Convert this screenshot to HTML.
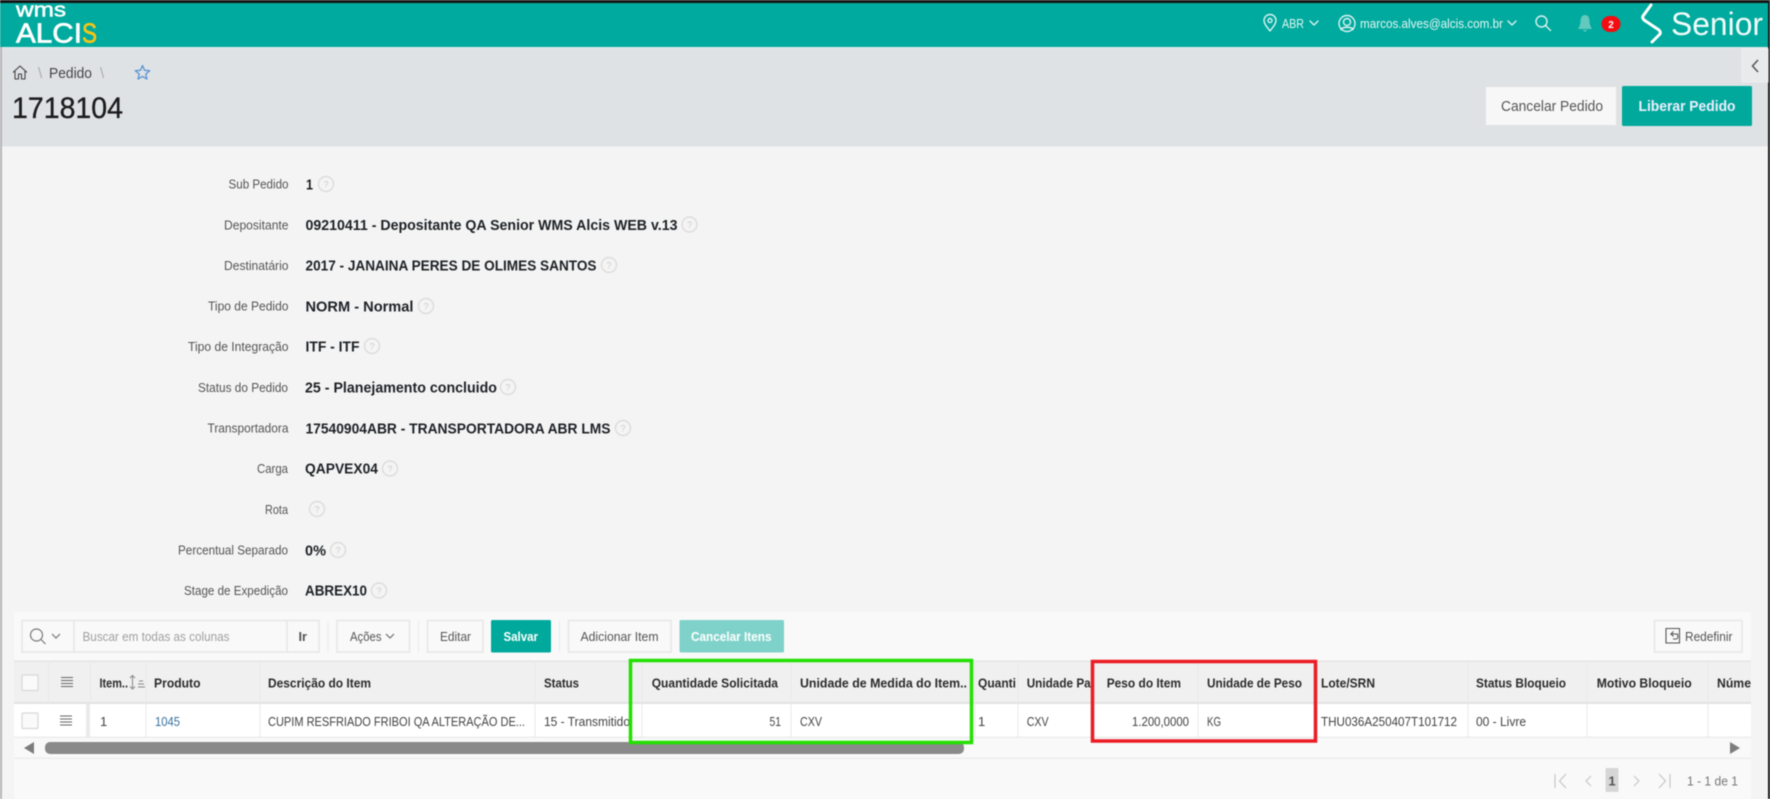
<!DOCTYPE html>
<html lang="pt-BR"><head><meta charset="utf-8"><title>Pedido 1718104</title>
<style>
html,body{margin:0;padding:0;width:1770px;height:799px;overflow:hidden;background:#f4f4f4}
svg{display:block;filter:blur(.45px)}
text{font-family:"Liberation Sans",sans-serif}
.l{font-size:13px;fill:#555}
.v{font-size:15px;font-weight:700;fill:#1d2125}
.h{font-size:13px;font-weight:700;fill:#2b2b2b}
.d{font-size:13px;fill:#444}
.b{font-size:13px;fill:#555}
.w{font-size:13px;font-weight:700;fill:#fff}
.q{font-size:9px;fill:#ccc;text-anchor:middle}
.hc{fill:none;stroke:#dcdcdc;stroke-width:1.4}
.bx{fill:#f9f9f9;stroke:#e6e6e6;stroke-width:1.5}
.ln{stroke:#e9e9e9;stroke-width:1}
.ic{fill:none;stroke:#fff;stroke-width:1.4;stroke-linecap:round;stroke-linejoin:round;opacity:.85}
.pg{fill:none;stroke:#c4c4c4;stroke-width:1.1}
</style></head><body>
<svg width="1770" height="799" viewBox="0 0 1770 799" xmlns="http://www.w3.org/2000/svg">
<rect width="1770" height="799" fill="#f4f4f4"/>
<rect x="0" y="47" width="2" height="752" fill="#b5b5b5"/>
<!-- top -->
<rect width="1770" height="3" fill="#141414"/>
<rect y="3" width="1770" height="44" fill="#00aa9e"/>
<text x="16" y="16.500" font-size="20" fill="#fff" stroke="#fff" stroke-width=".5" textLength="50" lengthAdjust="spacingAndGlyphs">wms</text>
<text x="16" y="42.500" font-size="28" fill="#fff" stroke="#fff" stroke-width=".7" textLength="66" lengthAdjust="spacingAndGlyphs">ALCI</text>
<text x="82" y="42.500" font-size="28" fill="#f5c518" stroke="#f5c518" stroke-width=".7" textLength="15" lengthAdjust="spacingAndGlyphs">S</text>
<!-- header right -->
<path class="ic" d="M1270 31c-3-4-6-7-6-10.500a6 6 0 0 1 12 0c0 3.500-3 6.500-6 10.500z"/><circle class="ic" cx="1270" cy="20.500" r="2"/>
<text x="1282" y="28" font-size="13" fill="#fff" opacity=".9" textLength="22" lengthAdjust="spacingAndGlyphs">ABR</text>
<path class="ic" d="M1310 21l4 4 4-4"/>
<circle class="ic" cx="1347" cy="23.500" r="8"/><circle class="ic" cx="1347" cy="22" r="3.500"/><path class="ic" d="M1341 29.500c1.500-3 10.500-3 12 0"/>
<text x="1360" y="28" font-size="13" fill="#fff" opacity=".9" textLength="143" lengthAdjust="spacingAndGlyphs">marcos.alves@alcis.com.br</text>
<path class="ic" d="M1508 21l4 4 4-4"/>
<circle class="ic" cx="1541.500" cy="21.500" r="5.500"/><path class="ic" d="M1545.500 25.500l5 5"/>
<path d="M1585 15c3 0 4.500 2.500 4.500 6 0 4 1.500 6 2.500 8h-14c1-2 2.500-4 2.500-8 0-3.500 1.500-6 4.500-6zM1582.500 30h5l-2.500 2z" fill="#62c9be"/>
<rect x="1601.500" y="16" width="19" height="16" rx="8" fill="#f60b10"/>
<text x="1611" y="28" font-size="10" font-weight="700" fill="#fff" text-anchor="middle">2</text>
<path d="M1651 5L1643 16Q1642 18 1644 20L1659 30Q1661 32 1660 34L1652 42" fill="none" stroke="#fff" stroke-width="3" stroke-linecap="round" stroke-linejoin="round"/>
<text x="1671" y="35" font-size="32" fill="#f2fbfa" textLength="92" lengthAdjust="spacingAndGlyphs">Senior</text>
<rect x="1768" width="2" height="799" fill="#1a1a1a"/>
<!-- subheader -->
<rect x="2" y="47.500" width="1766" height="99" fill="#dfe2e5"/>
<rect x="2" y="47" width="1766" height="1" fill="#e9ecec"/>
<path d="M13 72.500l7-6.500 7 6.500M15 71v8h3.500v-5h3v5h3.500v-8" fill="none" stroke="#444" stroke-width="1.100" stroke-linejoin="round"/>
<text x="38" y="78" font-size="15" fill="#aaa">\</text>
<text x="49" y="78" font-size="15" fill="#444" textLength="43" lengthAdjust="spacingAndGlyphs">Pedido</text>
<text x="100" y="78" font-size="15" fill="#aaa">\</text>
<path d="M142.500 65.500l2 4.800 5.200.400-4 3.400 1.300 5-4.500-2.700-4.500 2.700 1.300-5-4-3.400 5.200-.400z" fill="none" stroke="#5b93d3" stroke-width="1.300" stroke-linejoin="round"/>
<text x="12" y="118" font-size="30" fill="#1c1c1c" stroke="#1c1c1c" stroke-width=".35" textLength="111" lengthAdjust="spacingAndGlyphs">1718104</text>
<rect x="1742" y="49" width="26" height="33" fill="#e8eaec" stroke="#eceeef"/>
<path d="M1758 60l-5.500 6 5.500 6" fill="none" stroke="#555" stroke-width="1.500"/>
<rect x="1486" y="87" width="130" height="38" fill="#f7f7f7"/>
<text x="1501" y="111" font-size="15" fill="#555" textLength="102" lengthAdjust="spacingAndGlyphs">Cancelar Pedido</text>
<rect x="1622" y="86" width="130" height="40" rx="1.500" fill="#00a99b"/>
<text x="1638.500" y="111" font-size="15" font-weight="700" fill="#eef" textLength="97" lengthAdjust="spacingAndGlyphs">Liberar Pedido</text>
<!-- form -->
<g class="fm">
<text class="l" x="228.500" y="188.500" textLength="60" lengthAdjust="spacingAndGlyphs">Sub Pedido</text>
<text class="v" x="306" y="189.500" textLength="7" lengthAdjust="spacingAndGlyphs">1</text>
<circle class="hc" cx="326" cy="184" r="7.500"/><text class="q" x="326" y="187.500">?</text>
<text class="l" x="224" y="229.500" textLength="64.500" lengthAdjust="spacingAndGlyphs">Depositante</text>
<text class="v" x="305.500" y="230" textLength="372" lengthAdjust="spacingAndGlyphs">09210411 - Depositante QA Senior WMS Alcis WEB v.13</text>
<circle class="hc" cx="689.500" cy="224.500" r="7.500"/><text class="q" x="689.500" y="228">?</text>
<text class="l" x="224" y="270" textLength="64.500" lengthAdjust="spacingAndGlyphs">Destinatário</text>
<text class="v" x="305.500" y="270.500" textLength="291" lengthAdjust="spacingAndGlyphs">2017 - JANAINA PERES DE OLIMES SANTOS</text>
<circle class="hc" cx="609" cy="265" r="7.500"/><text class="q" x="609" y="268.500">?</text>
<text class="l" x="208" y="310.500" textLength="80.500" lengthAdjust="spacingAndGlyphs">Tipo de Pedido</text>
<text class="v" x="305.500" y="311.500" textLength="108" lengthAdjust="spacingAndGlyphs">NORM - Normal</text>
<circle class="hc" cx="426" cy="306" r="7.500"/><text class="q" x="426" y="309.500">?</text>
<text class="l" x="188" y="351" textLength="100.500" lengthAdjust="spacingAndGlyphs">Tipo de Integração</text>
<text class="v" x="305.500" y="351.500" textLength="54" lengthAdjust="spacingAndGlyphs">ITF - ITF</text>
<circle class="hc" cx="372" cy="346" r="7.500"/><text class="q" x="372" y="349.500">?</text>
<text class="l" x="198" y="392" textLength="90" lengthAdjust="spacingAndGlyphs">Status do Pedido</text>
<text class="v" x="305" y="392.500" textLength="192" lengthAdjust="spacingAndGlyphs">25 - Planejamento concluido</text>
<circle class="hc" cx="508" cy="387" r="7.500"/><text class="q" x="508" y="390.500">?</text>
<text class="l" x="207.500" y="432.500" textLength="81" lengthAdjust="spacingAndGlyphs">Transportadora</text>
<text class="v" x="305.500" y="433.500" textLength="305" lengthAdjust="spacingAndGlyphs">17540904ABR - TRANSPORTADORA ABR LMS</text>
<circle class="hc" cx="623" cy="428" r="7.500"/><text class="q" x="623" y="431.500">?</text>
<text class="l" x="257" y="473" textLength="31" lengthAdjust="spacingAndGlyphs">Carga</text>
<text class="v" x="305" y="473.500" textLength="73" lengthAdjust="spacingAndGlyphs">QAPVEX04</text>
<circle class="hc" cx="390" cy="468.500" r="7.500"/><text class="q" x="390" y="472">?</text>
<text class="l" x="265" y="514" textLength="23" lengthAdjust="spacingAndGlyphs">Rota</text>
<circle class="hc" cx="317" cy="509" r="7.500"/><text class="q" x="317" y="512.500">?</text>
<text class="l" x="178" y="554.500" textLength="110" lengthAdjust="spacingAndGlyphs">Percentual Separado</text>
<text class="v" x="305" y="555.500" textLength="21" lengthAdjust="spacingAndGlyphs">0%</text>
<circle class="hc" cx="338" cy="550" r="7.500"/><text class="q" x="338" y="553.500">?</text>
<text class="l" x="184" y="595" textLength="104" lengthAdjust="spacingAndGlyphs">Stage de Expedição</text>
<text class="v" x="305" y="595.500" textLength="62" lengthAdjust="spacingAndGlyphs">ABREX10</text>
<circle class="hc" cx="379" cy="590.500" r="7.500"/><text class="q" x="379" y="594">?</text>
</g>
<!-- panel -->
<rect x="14" y="612" width="1737" height="187" fill="#f9f9f9"/>
<rect x="22" y="620.500" width="297" height="31.500" class="bx"/>
<path class="ln" style="stroke:#e6e6e6;stroke-width:1.500" d="M74 620v32M287 620v32"/>
<circle cx="36.500" cy="635" r="6" fill="none" stroke="#777" stroke-width="1.200"/><path d="M41 639.500l4.500 4.500M52 634l4 4 4-4" fill="none" stroke="#777" stroke-width="1.200"/>
<text x="82.500" y="641" font-size="13" fill="#a0a0a0" textLength="147" lengthAdjust="spacingAndGlyphs">Buscar em todas as colunas</text>
<text x="298.500" y="641" font-size="13" font-weight="700" fill="#555" textLength="8.500" lengthAdjust="spacingAndGlyphs">Ir</text>
<path class="ln" d="M328 621v31M418.500 621v31M559.500 621v31"/>
<rect x="337" y="620.500" width="72.500" height="31.500" class="bx"/>
<text class="b" x="350" y="641" textLength="31.500" lengthAdjust="spacingAndGlyphs">Ações</text>
<path d="M386 634l4 4 4-4" fill="none" stroke="#666" stroke-width="1.100"/>
<rect x="427.500" y="620.500" width="55.500" height="31.500" class="bx"/>
<text class="b" x="440" y="641" textLength="31" lengthAdjust="spacingAndGlyphs">Editar</text>
<rect x="491" y="620" width="60" height="32.500" rx="1.500" fill="#00a99b"/>
<text class="w" x="503.500" y="641" textLength="34.500" lengthAdjust="spacingAndGlyphs">Salvar</text>
<rect x="568.500" y="620.500" width="102.500" height="31.500" class="bx"/>
<text class="b" x="580.500" y="641" textLength="78" lengthAdjust="spacingAndGlyphs">Adicionar Item</text>
<rect x="679.500" y="620" width="104.500" height="32.500" rx="1.500" fill="#7fd2ca"/>
<text class="w" x="691" y="641" textLength="80.500" lengthAdjust="spacingAndGlyphs">Cancelar Itens</text>
<rect x="1654.500" y="620.500" width="87.500" height="31.500" class="bx"/>
<path d="M1666 628.500h13.500v14.500h-13.500zM1678 634h-7l2.500-2.500M1671 634l2.500 2.500M1671 634h5c2.500 0 2.500 5 0 5h-3" fill="none" stroke="#555" stroke-width="1.100"/>
<text class="b" x="1685" y="641" textLength="47.500" lengthAdjust="spacingAndGlyphs">Redefinir</text>
<!-- table -->
<rect x="14" y="661" width="1737" height="42.500" fill="#f0f0f0"/>
<rect x="14" y="660.500" width="1737" height="1.500" fill="#e4e4e4"/>
<rect x="14" y="702" width="1737" height="2" fill="#e2e2e2"/>
<rect x="14" y="704" width="1737" height="33" fill="#fff"/>
<rect x="14" y="736.500" width="1737" height="1.500" fill="#ececec"/>
<rect x="14" y="757.500" width="1737" height="1.500" fill="#ededed"/>
<path class="ln" d="M48.500 661v42M90.500 661v42M146 661v76M260 661v76M535 661v76M642 661v76M791 661v76M975 661v76M1018 661v76M1094 661v76M1198 661v76M1317 661v76M1468 661v76M1587 661v76M1708 661v76"/>
<rect x="86" y="704" width="4" height="33" fill="#eaeaea"/>
<rect x="22" y="675" width="16" height="15.500" rx="1" fill="#fafafa" stroke="#d8d8d8" stroke-width="1.200"/>
<rect x="22" y="713" width="16" height="15.500" rx="1" fill="#fafafa" stroke="#d8d8d8" stroke-width="1.200"/>
<path d="M61 677.500h12M61 680.500h12M61 683.500h12M61 686.500h12M60 716h12M60 719h12M60 722h12M60 725h12" stroke="#666" stroke-width="1.100"/>
<text class="h" x="99.500" y="687.500" textLength="28.500" lengthAdjust="spacingAndGlyphs">Item..</text>
<path d="M132.500 676v12M130 678l2.500-2.500 2.500 2.500M130 686.500l2.500 2.500 2.500-2.500M139 681h4M138 684h6M138 687h7" fill="none" stroke="#888" stroke-width="1"/>
<text class="h" x="154" y="687.500" textLength="46.500" lengthAdjust="spacingAndGlyphs">Produto</text>
<text class="h" x="268" y="687.500" textLength="103" lengthAdjust="spacingAndGlyphs">Descrição do Item</text>
<text class="h" x="544" y="687.500" textLength="35" lengthAdjust="spacingAndGlyphs">Status</text>
<text class="h" x="651.700" y="687.500" textLength="126.300" lengthAdjust="spacingAndGlyphs">Quantidade Solicitada</text>
<text class="h" x="800" y="687.500" textLength="167" lengthAdjust="spacingAndGlyphs">Unidade de Medida do Item..</text>
<text class="h" x="978" y="687.500" textLength="38" lengthAdjust="spacingAndGlyphs">Quanti</text>
<text class="h" x="1026.700" y="687.500" textLength="64" lengthAdjust="spacingAndGlyphs">Unidade Pa</text>
<text class="h" x="1106.700" y="687.500" textLength="74.300" lengthAdjust="spacingAndGlyphs">Peso do Item</text>
<text class="h" x="1207" y="687.500" textLength="95" lengthAdjust="spacingAndGlyphs">Unidade de Peso</text>
<text class="h" x="1321" y="687.500" textLength="54" lengthAdjust="spacingAndGlyphs">Lote/SRN</text>
<text class="h" x="1476" y="687.500" textLength="90" lengthAdjust="spacingAndGlyphs">Status Bloqueio</text>
<text class="h" x="1596.700" y="687.500" textLength="95" lengthAdjust="spacingAndGlyphs">Motivo Bloqueio</text>
<text class="h" x="1717" y="687.500" textLength="34" lengthAdjust="spacingAndGlyphs">Núme</text>
<text class="d" x="100" y="726">1</text>
<text class="d" x="155" y="726" style="fill:#35709f" textLength="25" lengthAdjust="spacingAndGlyphs">1045</text>
<text class="d" x="268" y="726" textLength="257" lengthAdjust="spacingAndGlyphs">CUPIM RESFRIADO FRIBOI QA ALTERAÇÃO DE...</text>
<text class="d" x="544" y="726" textLength="86" lengthAdjust="spacingAndGlyphs">15 - Transmitido</text>
<text class="d" x="769.500" y="726" textLength="11.500" lengthAdjust="spacingAndGlyphs">51</text>
<text class="d" x="800" y="726" textLength="22" lengthAdjust="spacingAndGlyphs">CXV</text>
<text class="d" x="978" y="726">1</text>
<text class="d" x="1026.700" y="726" textLength="22" lengthAdjust="spacingAndGlyphs">CXV</text>
<text class="d" x="1132" y="726" textLength="57" lengthAdjust="spacingAndGlyphs">1.200,0000</text>
<text class="d" x="1207" y="726" textLength="14" lengthAdjust="spacingAndGlyphs">KG</text>
<text class="d" x="1321" y="726" textLength="136" lengthAdjust="spacingAndGlyphs">THU036A250407T101712</text>
<text class="d" x="1476" y="726" textLength="50" lengthAdjust="spacingAndGlyphs">00 - Livre</text>
<!-- scrollbar -->
<rect x="45" y="742" width="919" height="12" rx="5" fill="#8a8a8a"/>
<path d="M34 742v12l-10-6z" fill="#7d7d7d"/>
<path d="M1730 742v12l10-6z" fill="#7d7d7d"/>
<!-- highlight boxes -->
<rect x="630.500" y="660.500" width="341" height="82" fill="none" stroke="#23e000" stroke-width="3.500"/>
<rect x="1092.500" y="661.500" width="223" height="79.500" fill="none" stroke="#ec1c24" stroke-width="3.500"/>
<!-- pager -->
<path class="pg" d="M1555 774v14M1566 774l-6.500 7 6.500 7M1591 776l-5 5 5 5M1634 776l5 5-5 5M1659 774l6.500 7-6.500 7M1670 774v14"/>
<rect x="1605.500" y="768" width="13" height="24" rx="1" fill="#d6d6d6"/>
<text x="1612" y="785.500" font-size="13" font-weight="700" fill="#555" text-anchor="middle">1</text>
<text x="1687" y="785.500" font-size="13" fill="#777" textLength="51" lengthAdjust="spacingAndGlyphs">1 - 1 de 1</text>
</svg>
</body></html>
